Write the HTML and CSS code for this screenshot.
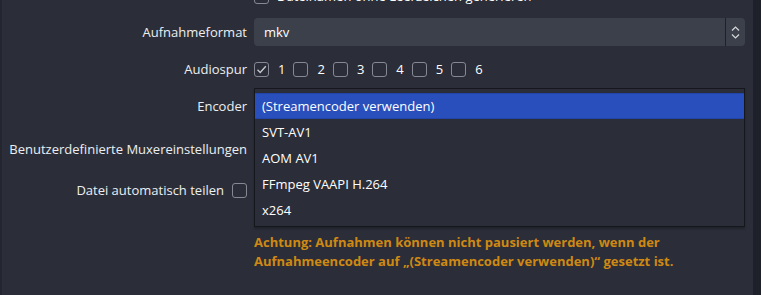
FILE: index.html
```html
<!DOCTYPE html>
<html lang="de">
<head>
    <meta charset="UTF-8">
    <title>Aufnahme</title>
    <link rel="stylesheet" href="styles.css">
</head>
<body>

<div class="panel">
    <div class="form">

        <!-- oberste Zeile, halb weggescrollt -->
        <div class="row row-top">
            <div class="label"></div>
            <div class="field">
                <label class="check"><span class="box"></span>Dateinamen ohne Leerzeichen generieren</label>
            </div>
        </div>

        <div class="row">
            <div class="label">Aufnahmeformat</div>
            <div class="field">
                <div class="combo">
                    <span class="combo-text">mkv</span>
                    <span class="combo-btn">
                        <svg width="9" height="13" viewBox="0 0 9 13"><path d="M1 4.5 L4.5 1 L8 4.5 M1 8.5 L4.5 12 L8 8.5" fill="none" stroke="#d6d7db" stroke-width="1.2"/></svg>
                    </span>
                </div>
            </div>
        </div>

        <div class="row">
            <div class="label">Audiospur</div>
            <div class="field tracks">
                <label class="check"><span class="box"><svg width="13" height="13" viewBox="0 0 13 13"><path d="M2.5 6.8 L5.2 9.5 L10.8 3.2" fill="none" stroke="#c9cad0" stroke-width="1.3"/></svg></span>1</label>
                <label class="check"><span class="box"></span>2</label>
                <label class="check"><span class="box"></span>3</label>
                <label class="check"><span class="box"></span>4</label>
                <label class="check"><span class="box"></span>5</label>
                <label class="check"><span class="box"></span>6</label>
            </div>
        </div>

        <div class="row row-encoder">
            <div class="label">Encoder</div>
            <div class="field">
                <div class="combo"></div>

                <!-- geöffnete Liste -->
                <ul class="popup">
                    <li class="selected">(Streamencoder verwenden)</li>
                    <li>SVT-AV1</li>
                    <li>AOM AV1</li>
                    <li>FFmpeg VAAPI H.264</li>
                    <li>x264</li>
                </ul>
            </div>
        </div>

        <div class="row row-mux">
            <div class="label">Benutzerdefinierte Muxereinstellungen</div>
            <div class="field"><div class="textfield"></div></div>
        </div>

        <div class="row row-split">
            <div class="label">Datei automatisch teilen <span class="box"></span></div>
            <div class="field"></div>
        </div>

        <div class="row row-warn">
            <div class="label"></div>
            <div class="field warning">
                Achtung: Aufnahmen können nicht pausiert werden, wenn der Aufnahmeencoder auf „(Streamencoder verwenden)“ gesetzt ist.
            </div>
        </div>

    </div>
</div>

</body>
</html>
```

FILE: styles.css
```css
/* Grundlegende Stile */
body {
    margin: 0;
    background-color: #1f212a;
    font-family: 'Open Sans', sans-serif;
    font-size: 13px;
    color: #fefefe;
}

.panel {
    width: 751px;
    height: 295px;
    overflow: hidden;
    background-color: #2b2e38;
    border-left: 2px solid #24262f;
}

.form {
    display: flex;
    flex-direction: column;
    gap: 14px;
    margin-top: -11px;
}

.row {
    display: grid;
    grid-template-columns: 245px 491px;
    column-gap: 7px;
    align-items: center;
}

.label {
    text-align: right;
    line-height: 18px;
    color: #eceef2;
    display: flex;
    justify-content: flex-end;
    align-items: center;
    gap: 8px;
}

.field {
    position: relative;
    min-height: 15px;
}

/* Checkboxen */
.check {
    display: flex;
    align-items: center;
    gap: 8px;
    line-height: 15px;
}

.box {
    display: inline-flex;
    align-items: center;
    justify-content: center;
    width: 13px;
    height: 13px;
    border: 1px solid #868993;
    border-radius: 3px;
    flex-shrink: 0;
}

.tracks {
    display: flex;
    gap: 8px;
}

.tracks .check {
    gap: 9px;
}

/* Auswahlfelder */
.combo {
    display: flex;
    height: 28px;
    background-color: #3c404b;
    border-radius: 4px;
}

.combo-text {
    flex: 1;
    padding-left: 10px;
    line-height: 28px;
}

.combo-btn {
    width: 19px;
    border-left: 1px solid #1f212a;
    display: flex;
    align-items: center;
    justify-content: center;
}

.textfield {
    height: 28px;
    background-color: #3c404b;
    border-radius: 4px;
}

.row-mux {
    margin-top: 1px;
}

.row-split {
    margin-top: 4px;
}

.row-warn {
    margin-top: 20px;
}

/* offene Liste */
.popup {
    position: absolute;
    z-index: 10;
    top: -4px;
    left: 0;
    width: 489px;
    margin: 0;
    padding: 4px 0 3px;
    list-style: none;
    background-color: #2b2e38;
    border: 1px solid #16171d;
    box-shadow: 0 2px 2px rgba(0, 0, 0, 0.25);
}

.popup li {
    height: 26px;
    line-height: 26px;
    padding-left: 7px;
}

.popup li.selected {
    background-color: #284fbb;
    border-top: 1px solid #2145a8;
    border-bottom: 1px solid #2145a8;
    height: 24px;
    line-height: 24px;
}

.warning {
    color: #cf8913;
    font-weight: bold;
    line-height: 19px;
}
```
